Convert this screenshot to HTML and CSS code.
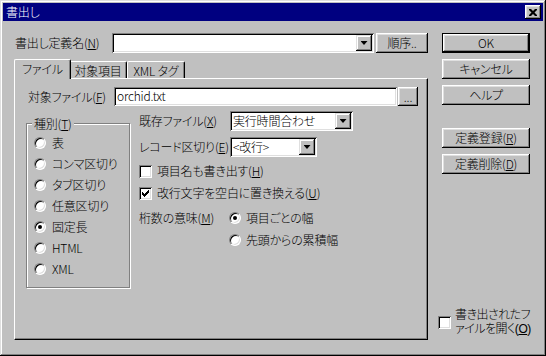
FILE: index.html
```html
<!DOCTYPE html>
<html lang="ja">
<head>
    <meta charset="UTF-8">
    <title>書出し</title>
    <link rel="stylesheet" href="styles.css">
</head>
<body>
    <div class="window">
        <div class="titlebar">
            <span class="title">書出し</span>
            <span class="close">
                <svg width="8" height="7" viewBox="0 0 8 7"><path d="M0 0h2l2 2 2-2h2v1l-2.5 2.5 2.5 2.5v1h-2l-2-2-2 2h-2v-1l2.5-2.5-2.5-2.5z"/></svg>
            </span>
        </div>

        <div class="client">
            <div class="main">
                <div class="top-row">
                    <span class="top-label">書出し定義名(<u>N</u>)</span>
                    <div class="field combo combo-name"><span class="combo-text"></span><span class="drop"></span></div>
                    <button class="btn btn-order">順序..</button>
                </div>

                <div class="tabs">
                    <div class="tab active">ファイル</div>
                    <div class="tab">対象項目</div>
                    <div class="tab">XML タグ</div>
                </div>

                <div class="panel">
                    <div class="file-row">
                        <span class="file-label">対象ファイル(<u>F</u>)</span>
                        <div class="field file-field">orchid.txt</div>
                        <button class="btn btn-browse">...</button>
                    </div>

                    <div class="panel-body">
                        <div class="group">
                            <span class="group-title">種別(<u>T</u>)</span>
                            <div class="radio-row"><span class="radio"></span>表</div>
                            <div class="radio-row"><span class="radio"></span>コンマ区切り</div>
                            <div class="radio-row"><span class="radio"></span>タブ区切り</div>
                            <div class="radio-row"><span class="radio"></span>任意区切り</div>
                            <div class="radio-row"><span class="radio checked"></span>固定長</div>
                            <div class="radio-row"><span class="radio"></span>HTML</div>
                            <div class="radio-row"><span class="radio"></span>XML</div>
                        </div>

                        <div class="options">
                            <div class="opt-row">
                                <span class="opt-label">既存ファイル(<u>X</u>)</span>
                                <div class="field combo combo-exist"><span class="combo-text">実行時間合わせ</span><span class="drop"></span></div>
                            </div>
                            <div class="opt-row second">
                                <span class="opt-label">レコード区切り(<u>E</u>)</span>
                                <div class="field combo combo-sep"><span class="combo-text">&lt;改行&gt;</span><span class="drop"></span></div>
                            </div>
                            <div class="check-row first"><span class="check"></span>項目名も書き出す(<u>H</u>)</div>
                            <div class="check-row"><span class="check checked"><svg width="7" height="7" viewBox="0 0 7 7"><path d="M0 2h1v1h1v1h1v-1h1v-1h1v-1h1v-1h1v3h-1v1h-1v1h-1v1h-1v1h-1v-1h-1v-1h-1z"/></svg></span>改行文字を空白に置き換える(<u>U</u>)</div>
                            <div class="digit-row first">
                                <span class="digit-label">桁数の意味(<u>M</u>)</span>
                                <span class="radio checked"></span>項目ごとの幅
                            </div>
                            <div class="digit-row indent">
                                <span class="radio"></span>先頭からの累積幅
                            </div>
                        </div>
                    </div>
                </div>
            </div>

            <div class="side">
                <button class="btn side-btn default">OK</button>
                <button class="btn side-btn">キャンセル</button>
                <button class="btn side-btn">ヘルプ</button>
                <button class="btn side-btn spaced">定義登録(<u>R</u>)</button>
                <button class="btn side-btn">定義削除(<u>D</u>)</button>
                <div class="open-check">
                    <span class="check"></span>
                    <span class="open-text">書き出されたフ<br>ァイルを開く(<u>O</u>)</span>
                </div>
            </div>
        </div>
    </div>
</body>
</html>
```

FILE: styles.css
```css
body {
    margin: 0;
    background: #c0c0c0;
    font-family: 'Noto Sans CJK JP', 'Liberation Sans', sans-serif;
    font-size: 12px;
    font-weight: 300;
    line-height: 14px;
    font-feature-settings: "palt";
    letter-spacing: -0.2px;
    white-space: nowrap;
    color: #000;
}

u {
    text-decoration: underline;
    text-underline-offset: 1px;
}

.window {
    width: 546px;
    height: 356px;
    box-sizing: border-box;
    padding: 3px;
    background: #c0c0c0;
    box-shadow: inset -1px -1px #000, inset 1px 1px #dfdfdf,
                inset -2px -2px #808080, inset 2px 2px #fff;
}

.titlebar {
    height: 18px;
    background: #000080;
    color: #fff;
    display: flex;
    align-items: center;
    justify-content: space-between;
    padding: 0 2px 0 3px;
}

.close {
    width: 16px;
    height: 14px;
    box-sizing: border-box;
    background: #c0c0c0;
    display: flex;
    align-items: center;
    justify-content: center;
    box-shadow: inset -1px -1px #000, inset 1px 1px #fff,
                inset -2px -2px #808080, inset 2px 2px #dfdfdf;
}

.client {
    height: 332px;
    box-sizing: border-box;
    display: flex;
    padding: 12px 0 0 11px;
}

/* 3d pieces */
.btn {
    font: inherit;
    letter-spacing: inherit;
    color: #000;
    padding: 0;
    border: none;
    background: #c0c0c0;
    box-sizing: border-box;
    height: 20px;
    box-shadow: inset -1px -1px #000, inset 1px 1px #fff,
                inset -2px -2px #808080, inset 2px 2px #dfdfdf;
}

.field {
    box-sizing: border-box;
    background: #fff;
    box-shadow: inset 1px 1px #808080, inset -1px -1px #fff,
                inset 2px 2px #000, inset -2px -2px #dfdfdf;
}

.combo {
    height: 20px;
    display: flex;
    align-items: center;
    padding: 2px;
}

.combo-text {
    flex: 1;
    padding-left: 1px;
}

.drop {
    width: 16px;
    height: 16px;
    box-sizing: border-box;
    background: #c0c0c0;
    display: flex;
    align-items: center;
    justify-content: center;
    box-shadow: inset -1px -1px #000, inset 1px 1px #dfdfdf,
                inset -2px -2px #808080, inset 2px 2px #fff;
}

.drop::after {
    content: "";
    width: 7px;
    height: 4px;
    background: #000;
    clip-path: polygon(0 0, 100% 0, 50% 100%);
}

/* main column */
.main {
    width: 416px;
}

.top-row {
    display: flex;
    align-items: center;
    height: 20px;
}

.top-label {
    width: 97px;
    padding-left: 1px;
}

.combo-name {
    width: 262px;
}

.btn-order {
    width: 52px;
    margin-left: 2px;
}

.tabs {
    display: flex;
    align-items: flex-end;
    height: 19px;
    margin-top: 6px;
    padding-left: 2px;
}

.tab {
    height: 17px;
    box-sizing: border-box;
    padding: 1px 0 0;
    border-top: 1px solid #fff;
    border-left: 1px solid #fff;
    border-right: 1px solid #000;
    border-top-left-radius: 2px;
    border-top-right-radius: 2px;
    box-shadow: inset -1px 0 #808080;
    display: flex;
    align-items: center;
    justify-content: center;
}

.tab.active {
    width: 57px;
    height: 20px;
    margin: 0 -2px -1px -2px;
    padding: 0 0 2px;
    position: relative;
    z-index: 1;
    background: #c0c0c0;
}

.tab:nth-child(2) {
    width: 58px;
}

.tab:nth-child(3) {
    width: 58px;
}

.panel {
    width: 414px;
    height: 262px;
    box-sizing: border-box;
    border-top: 1px solid #fff;
    border-left: 1px solid #fff;
    border-right: 1px solid #000;
    border-bottom: 1px solid #000;
    box-shadow: inset -1px -1px #808080;
    padding: 8px 0 0 13px;
}

.file-row {
    display: flex;
    align-items: center;
    height: 19px;
}

.file-label {
    width: 86px;
}

.file-field {
    width: 283px;
    height: 19px;
    padding: 2px 0 0 3px;
    line-height: 14px;
}

.btn-browse {
    width: 20px;
    height: 19px;
    margin-left: 1px;
    line-height: 10px;
}

.panel-body {
    display: flex;
    margin-top: 5px;
}

.group {
    width: 102px;
    margin: 12px 0 0 -2px;
    padding-bottom: 8px;
    display: flex;
    flex-direction: column;
    border: 1px solid #808080;
    box-shadow: inset 1px 1px #fff, 1px 1px #fff;
}

.group-title {
    align-self: flex-start;
    margin: -7px 0 1px 5px;
    padding: 0 2px;
    background: #c0c0c0;
}

.radio-row {
    height: 21px;
    display: flex;
    align-items: center;
    padding-left: 7px;
}

.radio {
    width: 12px;
    height: 12px;
    box-sizing: border-box;
    flex: none;
    border-radius: 50%;
    background: #fff;
    border: 1px solid;
    border-color: #808080 #fff #fff #808080;
    box-shadow: inset 1px 1px #000, inset -1px -1px #dfdfdf;
    margin-right: 6px;
    display: flex;
    align-items: center;
    justify-content: center;
}

.radio.checked::after {
    content: "";
    width: 4px;
    height: 4px;
    border-radius: 50%;
    background: #000;
}

.check {
    width: 13px;
    height: 13px;
    box-sizing: border-box;
    flex: none;
    background: #fff;
    box-shadow: inset 1px 1px #808080, inset -1px -1px #fff,
                inset 2px 2px #000, inset -2px -2px #dfdfdf;
    margin-right: 5px;
    display: flex;
    align-items: center;
    justify-content: center;
}

.options {
    margin-left: 9px;
    flex: 1;
}

.opt-row {
    display: flex;
    align-items: center;
    height: 20px;
}

.opt-row.second {
    margin-top: 6px;
}

.opt-label {
    width: 91px;
}

.combo-exist {
    width: 123px;
}

.combo-sep {
    width: 87px;
}

.check-row {
    height: 22px;
    display: flex;
    align-items: center;
}

.check-row.first {
    margin-top: 3px;
}

.digit-row {
    height: 22px;
    display: flex;
    align-items: center;
}

.digit-row.first {
    margin-top: 3px;
}

.digit-label {
    width: 90px;
}

.digit-row .radio {
    margin-right: 5px;
}

.digit-row.indent {
    padding-left: 90px;
}

/* right side */
.side {
    width: 88px;
    margin-left: 12px;
    display: flex;
    flex-direction: column;
    gap: 6px;
    padding-bottom: 17px;
}

.side-btn {
    width: 88px;
}

.side-btn.default {
    border: 1px solid #000;
}

.side-btn.spaced {
    margin-top: 17px;
}

.open-check {
    margin-top: auto;
    margin-left: -4px;
    display: flex;
    align-items: center;
}

.open-check .check {
    margin-right: 4px;
}

.open-text {
    font-family: 'Liberation Sans', 'Noto Sans CJK JP', sans-serif;
    line-height: 14px;
    letter-spacing: -0.5px;
}
```
